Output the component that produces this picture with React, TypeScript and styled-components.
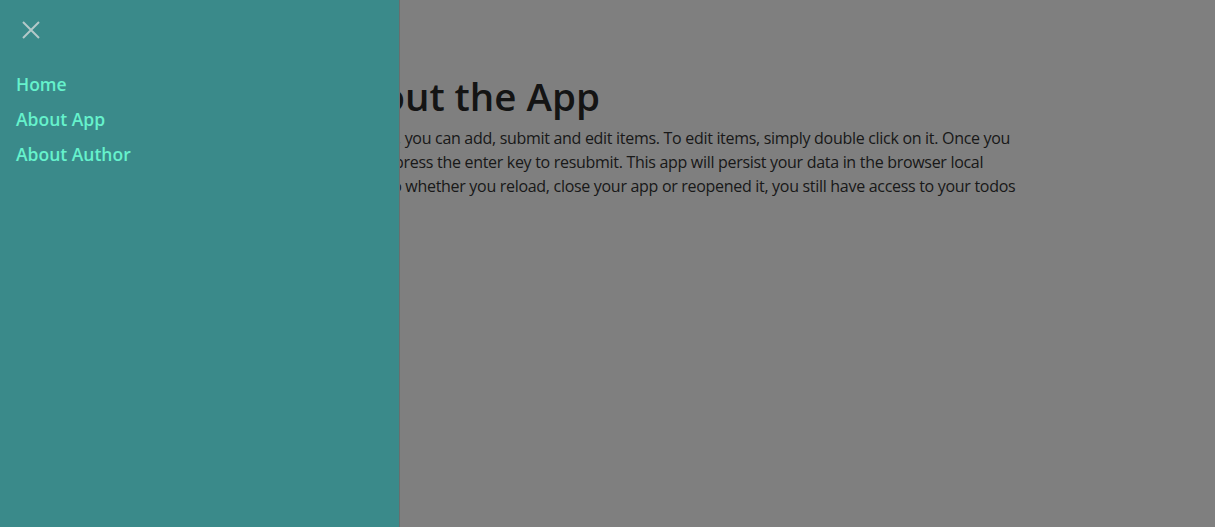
import styled, { createGlobalStyle } from "styled-components";

const GlobalStyle = createGlobalStyle`
  * { box-sizing: border-box; }
  body {
    margin: 0;
    background: #fff;
    color: #333;
    font-family: "Open Sans", "Noto Sans", sans-serif;
  }
`;

const Page = styled.main`
  padding: 70px 0 0 322px;
`;

const Title = styled.h1`
  margin: 0 0 4px;
  padding-left: 10px;
  font-size: 38.5px;
  font-weight: 600;
  line-height: 52px;
  color: #282828;
`;

const Text = styled.p`
  margin: 0;
  width: 760px;
  font-size: 16px;
  line-height: 24px;
  letter-spacing: -0.3px;
  color: #333;
`;

const Overlay = styled.div`
  position: fixed;
  inset: 0;
  background: rgba(0, 0, 0, 0.5);
`;

const Drawer = styled.aside`
  position: fixed;
  top: 0;
  left: 0;
  bottom: 0;
  width: 400px;
  background: #3a8a8a;
  border-right: 1px solid #6a6e6e;
  padding: 21px 16px;
`;

const CloseButton = styled.button`
  display: block;
  margin: 0 0 33px 6px;
  padding: 0;
  border: 0;
  background: none;
  cursor: pointer;
  width: 18px;
  height: 18px;
  color: #b4c9c9;
`;

const NavList = styled.ul`
  list-style: none;
  margin: 0;
  padding: 0;
  display: flex;
  flex-direction: column;
  gap: 10px;
`;

const NavLink = styled.a`
  display: block;
  font-size: 17.5px;
  line-height: 25px;
  font-weight: 600;
  color: #66f2cc;
  text-decoration: none;
`;

const links = ["Home", "About App", "About Author"];

export default function App() {
  return (
    <>
      <GlobalStyle />
      <Page>
        <Title>About the App</Title>
        <Text>
          In this app, you can add, submit and edit items. To edit items, simply double click on it. Once you
          <br />
          are done, press the enter key to resubmit. This app will persist your data in the browser local
          <br />
          storage. So whether you reload, close your app or reopened it, you still have access to your todos
        </Text>
      </Page>
      <Overlay />
      <Drawer>
        <CloseButton aria-label="Close menu">
          <svg width="18" height="18" viewBox="0 0 18 18" fill="none" stroke="currentColor" strokeWidth="2">
            <path d="M1 1 L17 17 M17 1 L1 17" />
          </svg>
        </CloseButton>
        <NavList>
          {links.map(l => (
            <li key={l}>
              <NavLink href="#">{l}</NavLink>
            </li>
          ))}
        </NavList>
      </Drawer>
    </>
  );
}
